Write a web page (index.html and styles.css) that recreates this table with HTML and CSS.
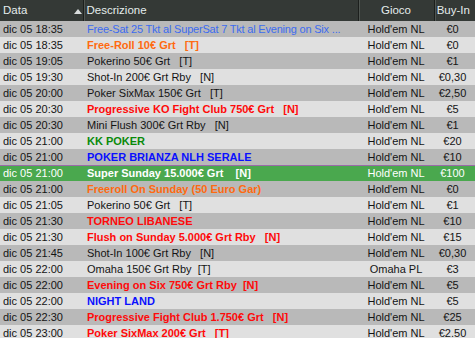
FILE: index.html
```html
<!DOCTYPE html>
<html>
<head>
<meta charset="utf-8">
<link rel="stylesheet" href="styles.css">
</head>
<body>
<table class="grid">
  <colgroup>
    <col class="c-date"><col class="c-desc"><col class="c-game"><col class="c-buy">
  </colgroup>
  <thead>
    <tr>
      <th class="h-date"><span>Data</span><span class="sort"></span></th>
      <th class="h-desc">Descrizione</th>
      <th class="h-game">Gioco</th>
      <th class="h-buy">Buy-In</th>
    </tr>
  </thead>
  <tbody>
    <tr class="odd"><td>dic 05 18:35</td><td class="d t-link">Free-Sat 25 Tkt al SuperSat 7 Tkt al Evening on Six ...</td><td class="g">Hold'em NL</td><td class="b">€0</td></tr>
    <tr class="even"><td>dic 05 18:35</td><td class="d t-orange">Free-Roll 10€ Grt   [T]</td><td class="g">Hold'em NL</td><td class="b">€0</td></tr>
    <tr class="odd"><td>dic 05 19:05</td><td class="d">Pokerino 50€ Grt   [T]</td><td class="g">Hold'em NL</td><td class="b">€1</td></tr>
    <tr class="even"><td>dic 05 19:30</td><td class="d">Shot-In 200€ Grt Rby   [N]</td><td class="g">Hold'em NL</td><td class="b">€0,30</td></tr>
    <tr class="odd"><td>dic 05 20:00</td><td class="d">Poker SixMax 150€ Grt   [T]</td><td class="g">Hold'em NL</td><td class="b">€2,50</td></tr>
    <tr class="even"><td>dic 05 20:30</td><td class="d t-red">Progressive KO Fight Club 750€ Grt   [N]</td><td class="g">Hold'em NL</td><td class="b">€5</td></tr>
    <tr class="odd"><td>dic 05 20:30</td><td class="d">Mini Flush 300€ Grt Rby   [N]</td><td class="g">Hold'em NL</td><td class="b">€1</td></tr>
    <tr class="even"><td>dic 05 21:00</td><td class="d t-green">KK POKER</td><td class="g">Hold'em NL</td><td class="b">€20</td></tr>
    <tr class="odd"><td>dic 05 21:00</td><td class="d t-blue">POKER BRIANZA NLH SERALE</td><td class="g">Hold'em NL</td><td class="b">€10</td></tr>
    <tr class="sel"><td>dic 05 21:00</td><td class="d t-sel">Super Sunday 15.000€ Grt    [N]</td><td class="g">Hold'em NL</td><td class="b">€100</td></tr>
    <tr class="odd"><td>dic 05 21:00</td><td class="d t-orange">Freeroll On Sunday (50 Euro Gar)</td><td class="g">Hold'em NL</td><td class="b">€0</td></tr>
    <tr class="even"><td>dic 05 21:05</td><td class="d">Pokerino 50€ Grt   [T]</td><td class="g">Hold'em NL</td><td class="b">€1</td></tr>
    <tr class="odd"><td>dic 05 21:30</td><td class="d t-red">TORNEO LIBANESE</td><td class="g">Hold'em NL</td><td class="b">€10</td></tr>
    <tr class="even"><td>dic 05 21:30</td><td class="d t-red">Flush on Sunday 5.000€ Grt Rby   [N]</td><td class="g">Hold'em NL</td><td class="b">€15</td></tr>
    <tr class="odd"><td>dic 05 21:45</td><td class="d">Shot-In 100€ Grt Rby   [N]</td><td class="g">Hold'em NL</td><td class="b">€0,30</td></tr>
    <tr class="even"><td>dic 05 22:00</td><td class="d">Omaha 150€ Grt Rby  [T]</td><td class="g">Omaha PL</td><td class="b">€3</td></tr>
    <tr class="odd"><td>dic 05 22:00</td><td class="d t-red">Evening on Six 750€ Grt Rby  [N]</td><td class="g">Hold'em NL</td><td class="b">€5</td></tr>
    <tr class="even"><td>dic 05 22:00</td><td class="d t-blue">NIGHT LAND</td><td class="g">Hold'em NL</td><td class="b">€5</td></tr>
    <tr class="odd"><td>dic 05 22:30</td><td class="d t-red">Progressive Fight Club 1.750€ Grt   [N]</td><td class="g">Hold'em NL</td><td class="b">€25</td></tr>
    <tr class="even"><td>dic 05 23:00</td><td class="d t-red">Poker SixMax 200€ Grt   [T]</td><td class="g">Hold'em NL</td><td class="b">€2.50</td></tr>
  </tbody>
</table>
</body>
</html>
```

FILE: styles.css
```css
html, body {
  margin: 0;
  padding: 0;
  background: #e0e0e0;
  overflow: hidden;
}
.grid {
  width: 475px;
  table-layout: fixed;
  border-collapse: collapse;
  font-family: "Liberation Sans", Arial, sans-serif;
  font-size: 11px;
  color: #141414;
}
.c-date { width: 83px; }
.c-desc { width: 275px; }
.c-game { width: 76px; }
.c-buy { width: 41px; }

thead th {
  height: 21px;
  padding: 0 0 0 3px;
  background: #343936;
  color: #e4ecec;
  font-weight: normal;
  font-size: 11.5px;
  text-align: left;
  white-space: nowrap;
  border-right: 1px solid #1c1f1d;
  box-shadow: inset 1px 0 0 #505652;
  line-height: 21px;
}
thead th.h-date {
  box-shadow: none;
  position: relative;
}
thead th.h-game, thead th.h-buy { text-align: center; padding: 0; }
thead th.h-buy { border-right: none; padding-right: 3px; }
thead th.h-desc { padding-left: 3px; }
.sort {
  position: absolute;
  left: 74px;
  top: 9px;
  width: 0;
  height: 0;
  border-left: 4px solid transparent;
  border-right: 4px solid transparent;
  border-bottom: 5px solid #d8dcdc;
}

tbody td {
  height: 16px;
  padding: 0 0 0 3px;
  line-height: 16px;
  white-space: pre;
  overflow: hidden;
}
tbody td.d { padding-left: 4px; }
tbody td.g { text-align: center; padding: 0; }
tbody td.b { text-align: center; padding: 0 4px 0 0; }

tr.odd td { background: #b9b9b9; }
tr.even td { background: #e0e0e0; }
tr.sel td {
  background: #4aa84e;
  color: #ffffff;
  box-shadow: inset 0 1px 0 #9a6aa8;
}

.t-link { color: #3c6cf0; letter-spacing: -0.2px; }
.t-orange { color: #ff6a10; font-weight: bold; }
.t-red { color: #ff0a0a; font-weight: bold; }
.t-green { color: #0a8a0a; font-weight: bold; }
.t-blue { color: #0a10ff; font-weight: bold; }
.t-sel { font-weight: bold; }
```
